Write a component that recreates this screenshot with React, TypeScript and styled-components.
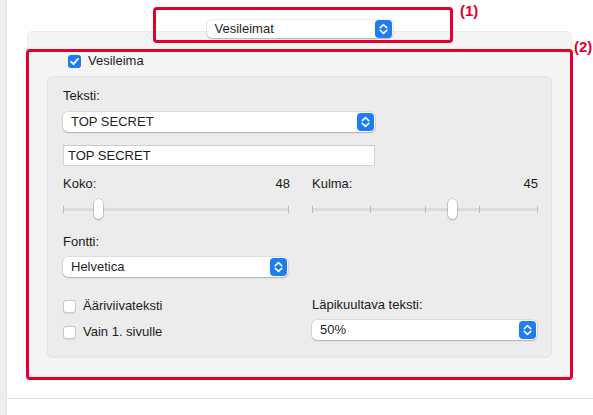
import React from "react";
import styled, { createGlobalStyle } from "styled-components";

const GlobalStyle = createGlobalStyle`
  html, body { margin: 0; padding: 0; background: #ffffff; }
  body { font-family: "Liberation Sans", Arial, sans-serif; font-size: 13px; color: #1c1c1c; }
  * { box-sizing: border-box; }
`;

const Page = styled.div`
  position: relative;
  width: 593px;
  height: 415px;
  display: flex;
  background: #ffffff;
  overflow: hidden;
`;

const LeftStrip = styled.div`
  width: 7px;
  height: 100%;
  background: #ededed;
  border-right: 1px solid #e3e3e3;
  flex: none;
`;

const Main = styled.div`
  flex: 1;
  height: 399px;
  border-bottom: 1px solid #e2e2e2;
  padding: 20px 0 0 20px;
  display: flex;
  flex-direction: column;
`;

const TabHeader = styled.div`
  position: relative;
  z-index: 1;
  width: 545px;
  display: flex;
  justify-content: center;
`;

const Panel = styled.div`
  width: 545px;
  height: 346px;
  margin-top: -7px;
  background: #f5f5f5;
  border: 1px solid #ececec;
  border-radius: 5px;
  padding: 21px 19px 0 19px;
  display: flex;
  flex-direction: column;
`;

const CheckRow = styled.label<{ $indent?: number }>`
  display: flex;
  align-items: center;
  gap: 7px;
  height: 16px;
  line-height: 16px;
  margin-left: ${(p) => p.$indent ?? 0}px;
  white-space: nowrap;
`;

const Box = styled.span<{ $checked?: boolean }>`
  width: 13px;
  height: 13px;
  flex: none;
  border-radius: 3px;
  display: flex;
  align-items: center;
  justify-content: center;
  background: ${(p) => (p.$checked ? "#1c7cf4" : "#ffffff")};
  border: ${(p) => (p.$checked ? "none" : "1px solid #c9c9c9")};
  box-shadow: ${(p) => (p.$checked ? "none" : "0 0.5px 1px rgba(0,0,0,0.08)")};
`;

const InnerBox = styled.div`
  margin-top: 7px;
  width: 505px;
  height: 282px;
  background: #ececec;
  border: 1px solid #e4e4e4;
  border-radius: 5px;
  padding: 11px 13px 0 15px;
  display: flex;
  flex-direction: column;
`;

const Label = styled.div<{ $mt?: number }>`
  height: 16px;
  line-height: 16px;
  margin-top: ${(p) => p.$mt ?? 0}px;
  color: #1a1a1a;
  white-space: nowrap;
`;

const PopupBox = styled.div<{ $w: number; $h?: number; $mt?: number }>`
  width: ${(p) => p.$w}px;
  height: ${(p) => p.$h ?? 20}px;
  margin-top: ${(p) => p.$mt ?? 0}px;
  background: #ffffff;
  border-radius: 5px;
  box-shadow: 0 0 0 0.5px rgba(0, 0, 0, 0.12), 0 1px 1.5px rgba(0, 0, 0, 0.22);
  display: flex;
  align-items: center;
  justify-content: space-between;
  padding: 0 1px 0 8px;
  color: #1f1f1f;
  white-space: nowrap;
  flex: none;
`;

const PopupText = styled.span`
  line-height: 16px;
`;

const TextField = styled.div`
  width: 312px;
  height: 21px;
  margin-top: 13px;
  background: #ffffff;
  border: 1px solid #d6d6d6;
  border-top-color: #cdcdcd;
  padding-left: 4px;
  line-height: 19px;
  color: #1a1a1a;
`;

const Columns = styled.div`
  margin-top: 10px;
  display: grid;
  grid-template-columns: 227px 226px;
  column-gap: 22px;
`;

const Cell = styled.div<{ $mt?: number }>`
  display: flex;
  flex-direction: column;
  margin-top: ${(p) => p.$mt ?? 0}px;
`;

const ValueRow = styled.div`
  display: flex;
  justify-content: space-between;
  height: 16px;
  line-height: 16px;
  color: #1a1a1a;
`;

const SliderWrap = styled.div<{ $w: number }>`
  position: relative;
  width: ${(p) => p.$w}px;
  height: 20px;
  margin-top: 7px;
`;

const Track = styled.div`
  position: absolute;
  left: 0;
  right: 0;
  top: 9px;
  height: 3px;
  border-radius: 1.5px;
  background: #dcdcdc;
`;

const Tick = styled.div`
  position: absolute;
  top: 7px;
  width: 1px;
  height: 7px;
  background: #bdbdbd;
`;

const Knob = styled.div`
  position: absolute;
  top: 0;
  width: 9px;
  height: 20px;
  margin-left: -4.5px;
  border-radius: 5px;
  background: #ffffff;
  box-shadow: 0 0 0 0.5px rgba(0, 0, 0, 0.2), 0 1px 2px rgba(0, 0, 0, 0.25);
`;

const CheckList = styled.div`
  display: flex;
  flex-direction: column;
  gap: 10px;
  margin-top: 21px;
`;

const Annot = styled.div<{ $x: number; $y: number; $w: number; $h: number }>`
  position: absolute;
  left: ${(p) => p.$x}px;
  top: ${(p) => p.$y}px;
  width: ${(p) => p.$w}px;
  height: ${(p) => p.$h}px;
  border: 3px solid #e4002b;
  border-radius: 4px;
  pointer-events: none;
`;

const AnnotLabel = styled.div<{ $x: number; $y: number }>`
  position: absolute;
  left: ${(p) => p.$x}px;
  top: ${(p) => p.$y}px;
  color: #e4002b;
  font-weight: bold;
  font-size: 15px;
  line-height: 17px;
  font-family: "Liberation Sans", Arial, sans-serif;
`;

const Stepper = () => (
  <svg width="17" height="18" viewBox="0 0 17 18">
    <rect x="0" y="0" width="17" height="18" rx="4" fill="#1f7df3" />
    <path d="M5.3 7.6 L8.5 4.6 L11.7 7.6" stroke="#fff" strokeWidth="1.6" fill="none" strokeLinecap="round" strokeLinejoin="round" />
    <path d="M5.3 10.4 L8.5 13.4 L11.7 10.4" stroke="#fff" strokeWidth="1.6" fill="none" strokeLinecap="round" strokeLinejoin="round" />
  </svg>
);

const CheckMark = () => (
  <svg width="11" height="11" viewBox="0 0 11 11">
    <path d="M2.2 5.8 L4.5 8.1 L8.9 2.9" stroke="#fff" strokeWidth="1.9" fill="none" strokeLinecap="round" strokeLinejoin="round" />
  </svg>
);

const Popup = ({ text, w, h, mt }: { text: string; w: number; h?: number; mt?: number }) => (
  <PopupBox $w={w} $h={h} $mt={mt}>
    <PopupText>{text}</PopupText>
    <Stepper />
  </PopupBox>
);

const Checkbox = ({ label, checked, indent }: { label: string; checked?: boolean; indent?: number }) => (
  <CheckRow $indent={indent}>
    <Box $checked={checked}>{checked && <CheckMark />}</Box>
    <span>{label}</span>
  </CheckRow>
);

const Slider = ({ w, value, ticks }: { w: number; value: number; ticks: number[] }) => (
  <SliderWrap $w={w}>
    <Track />
    {ticks.map((t) => (
      <Tick key={t} style={{ left: Math.round(t * (w - 1)) }} />
    ))}
    <Knob style={{ left: value * w }} />
  </SliderWrap>
);

export default function App() {
  return (
    <>
      <GlobalStyle />
      <Page>
        <LeftStrip />
        <Main>
          <TabHeader>
            <Popup text="Vesileimat" w={186} h={18} />
          </TabHeader>
          <Panel>
            <Checkbox label="Vesileima" checked indent={21} />
            <InnerBox>
              <Label>Teksti:</Label>
              <Popup text="TOP SECRET" w={312} mt={8} />
              <TextField>TOP SECRET</TextField>
              <Columns>
                <Cell>
                  <ValueRow>
                    <span>Koko:</span>
                    <span>48</span>
                  </ValueRow>
                  <Slider w={226} value={0.155} ticks={[0, 1]} />
                </Cell>
                <Cell>
                  <ValueRow>
                    <span>Kulma:</span>
                    <span>45</span>
                  </ValueRow>
                  <Slider w={226} value={0.62} ticks={[0, 0.258, 0.502, 0.742, 1]} />
                </Cell>
                <Cell $mt={15}>
                  <Label>Fontti:</Label>
                  <Popup text="Helvetica" w={225} mt={7} />
                </Cell>
                <div />
                <CheckList>
                  <Checkbox label="Ääriviivateksti" />
                  <Checkbox label="Vain 1. sivulle" />
                </CheckList>
                <Cell $mt={20}>
                  <Label>Läpikuultava teksti:</Label>
                  <Popup text="50%" w={225} mt={7} />
                </Cell>
              </Columns>
            </InnerBox>
          </Panel>
        </Main>
        <Annot $x={153} $y={7} $w={300} $h={36} />
        <AnnotLabel $x={460} $y={2}>(1)</AnnotLabel>
        <Annot $x={26} $y={49} $w={547} $h={331} />
        <AnnotLabel $x={574} $y={38}>(2)</AnnotLabel>
      </Page>
    </>
  );
}
